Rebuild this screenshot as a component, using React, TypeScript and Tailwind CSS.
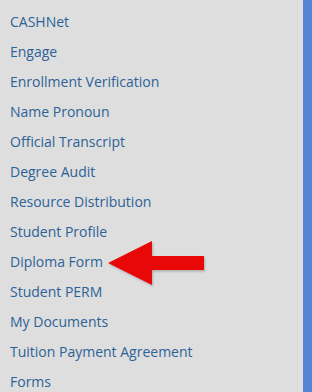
import React from "react";

const items = [
  "CASHNet",
  "Engage",
  "Enrollment Verification",
  "Name Pronoun",
  "Official Transcript",
  "Degree Audit",
  "Resource Distribution",
  "Student Profile",
  "Diploma Form",
  "Student PERM",
  "My Documents",
  "Tuition Payment Agreement",
  "Forms",
];

export default function App() {
  return (
    <div className="flex w-[312px] h-[392px] overflow-hidden bg-[#dedede]" style={{ fontFamily: '"Open Sans", sans-serif' }}>
      <ul className="relative flex-1 pt-[6px]">
        {items.map((t) => (
          <li key={t} className="h-[30px] flex items-center pl-[10px] text-[14px] text-[#2d6297]">
            <span>{t}</span>
          </li>
        ))}
        <svg className="absolute left-0 top-0" width="303" height="392" viewBox="0 0 303 392">
          <defs>
            <filter id="sh" x="-20%" y="-20%" width="140%" height="140%">
              <feGaussianBlur stdDeviation="1.2" />
            </filter>
          </defs>
          <polygon
            points="109,264.5 153,242.5 153,257.5 205,257.5 205,271.5 153,271.5 153,286.5"
            fill="#000"
            opacity="0.22"
            filter="url(#sh)"
          />
          <polygon
            points="108,263 152,241 152,256 204,256 204,270 152,270 152,285"
            fill="#e80808"
          />
        </svg>
      </ul>
      <div className="w-[9px] bg-[#5484d4]" />
    </div>
  );
}
